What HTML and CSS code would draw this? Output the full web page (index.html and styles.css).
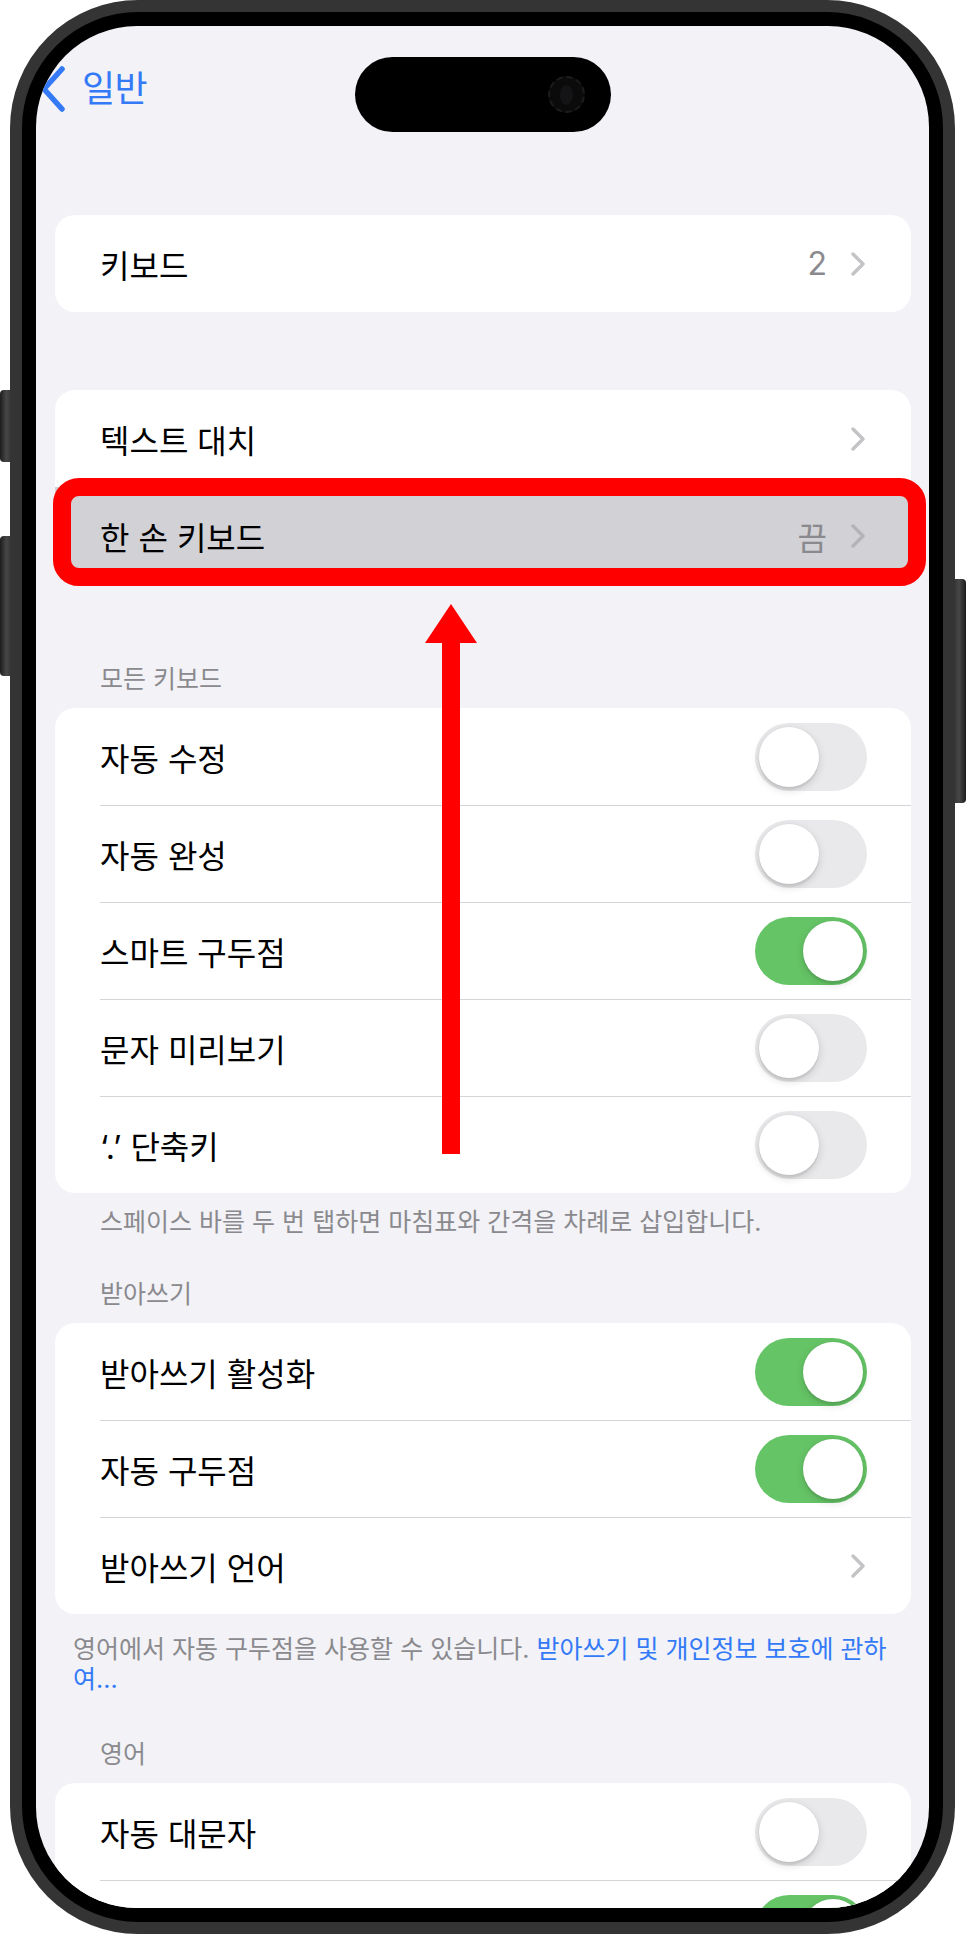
FILE: index.html
```html
<!DOCTYPE html>
<html lang="ko">
<head>
<meta charset="utf-8">
<title>키보드</title>
<link rel="stylesheet" href="styles.css">
</head>
<body>
<div class="device">
  <div class="side-btn btn-l1"></div>
  <div class="side-btn btn-l2"></div>
  <div class="side-btn btn-r1"></div>
  <div class="frame">
    <div class="screen">
      <div class="island"><span class="cam"><span class="cam-lens"></span></span></div>

      <nav class="nav">
        <div class="back">
          <svg class="back-chev" viewBox="0 0 26 46" width="26" height="46"><polyline points="22,3 4,23 22,43" fill="none" stroke="#347af6" stroke-width="5.5" stroke-linecap="round" stroke-linejoin="round"/></svg>
          <span class="back-label">일반</span>
        </div>
      </nav>

      <main class="content">
        <section class="card">
          <div class="row"><span class="label">키보드</span><span class="value">2</span><svg class="chev" viewBox="0 0 16 24" width="16" height="24"><polyline points="3,2 13,12 3,22" fill="none" stroke="#c4c4c7" stroke-width="3.4" stroke-linecap="round" stroke-linejoin="round"/></svg></div>
        </section>

        <section class="card card-gap">
          <div class="row"><span class="label">텍스트 대치</span><svg class="chev" viewBox="0 0 16 24" width="16" height="24"><polyline points="3,2 13,12 3,22" fill="none" stroke="#c4c4c7" stroke-width="3.4" stroke-linecap="round" stroke-linejoin="round"/></svg></div>
          <div class="row hl"><span class="label">한 손 키보드</span><span class="value">끔</span><svg class="chev" viewBox="0 0 16 24" width="16" height="24"><polyline points="3,2 13,12 3,22" fill="none" stroke="#b4b4b8" stroke-width="3.4" stroke-linecap="round" stroke-linejoin="round"/></svg><span class="annot"></span></div>
        </section>

        <h2 class="sec-h h-first">모든 키보드</h2>
        <section class="card">
          <div class="row"><span class="label">자동 수정</span><span class="toggle"><span class="knob"></span></span></div>
          <div class="row"><span class="label">자동 완성</span><span class="toggle"><span class="knob"></span></span></div>
          <div class="row"><span class="label">스마트 구두점</span><span class="toggle on"><span class="knob"></span></span></div>
          <div class="row"><span class="label">문자 미리보기</span><span class="toggle"><span class="knob"></span></span></div>
          <div class="row"><span class="label">‘.’ 단축키</span><span class="toggle"><span class="knob"></span></span></div>
        </section>
        <p class="sec-f">스페이스 바를 두 번 탭하면 마침표와 간격을 차례로 삽입합니다.</p>

        <h2 class="sec-h h-second">받아쓰기</h2>
        <section class="card">
          <div class="row"><span class="label">받아쓰기 활성화</span><span class="toggle on"><span class="knob"></span></span></div>
          <div class="row"><span class="label">자동 구두점</span><span class="toggle on"><span class="knob"></span></span></div>
          <div class="row"><span class="label">받아쓰기 언어</span><svg class="chev" viewBox="0 0 16 24" width="16" height="24"><polyline points="3,2 13,12 3,22" fill="none" stroke="#c4c4c7" stroke-width="3.4" stroke-linecap="round" stroke-linejoin="round"/></svg></div>
        </section>
        <p class="sec-f sec-f2"><span>영어에서 자동 구두점을 사용할 수 있습니다. </span><a class="link" href="#">받아쓰기 및 개인정보 보호에 관하여...</a></p>

        <h2 class="sec-h h-third">영어</h2>
        <section class="card">
          <div class="row"><span class="label">자동 대문자</span><span class="toggle"><span class="knob"></span></span></div>
          <div class="row"><span class="label"></span><span class="toggle on"><span class="knob"></span></span></div>
        </section>
      </main>

      <svg class="arrow" viewBox="0 0 52 550" width="52" height="550"><polygon points="26,0 0,39 52,39" fill="#ff0000"/><rect x="17" y="38" width="18" height="512" fill="#ff0000"/></svg>
    </div>
  </div>
</div>
</body>
</html>
```

FILE: styles.css
```css
* { box-sizing: border-box; }

html, body {
  margin: 0;
  padding: 0;
}

body {
  width: 966px;
  height: 1936px;
  background: #ffffff;
  overflow: hidden;
  font-family: "Inter", "Noto Sans CJK KR", sans-serif;
}

.device {
  position: relative;
  width: 966px;
  height: 1936px;
}

.side-btn {
  position: absolute;
  background: linear-gradient(90deg, #1c1c1c 0%, #474747 45%, #2a2a2a 100%);
  border-radius: 4px;
  z-index: 0;
}
.btn-l1 { left: 0; top: 390px; width: 14px; height: 72px; }
.btn-l2 { left: 0; top: 536px; width: 14px; height: 140px; }
.btn-r1 { left: 951px; top: 579px; width: 15px; height: 224px; background: linear-gradient(90deg, #2a2a2a 0%, #474747 55%, #1c1c1c 100%); }

.frame {
  position: relative;
  z-index: 1;
  margin-left: 10px;
  width: 945px;
  height: 1934px;
  border: 12px solid #343434;
  border-radius: 128px;
  background: #000;
  padding: 14px;
}

.screen {
  position: relative;
  width: 100%;
  height: 100%;
  border-radius: 101px;
  overflow: hidden;
  background: #f2f2f7;
}

.island {
  position: absolute;
  left: 319px;
  top: 31px;
  width: 256px;
  height: 75px;
  border-radius: 38px;
  background: #000;
  display: flex;
  align-items: center;
  justify-content: flex-end;
  padding-right: 26px;
  z-index: 5;
}
.cam {
  width: 37px;
  height: 37px;
  border-radius: 50%;
  background: #0b0b0b;
  border: 2px dashed #1d1d1f;
  display: flex;
  align-items: center;
  justify-content: center;
}
.cam-lens {
  width: 13px;
  height: 20px;
  border-radius: 50%;
  background: #141416;
}

.nav {
  height: 189px;
  padding-top: 40px;
}
.back {
  display: flex;
  align-items: center;
  margin-left: 4px;
  height: 46px;
}
.back-chev { display: block; }
.back-label {
  margin-left: 16px;
  font-size: 36px;
  letter-spacing: -0.5px;
  line-height: 46px;
  color: #347af6;
}

.content {
  padding: 0 18px 0 19px;
}

.card {
  background: #ffffff;
  border-radius: 20px;
}
.card-gap { margin-top: 78px; }

.row {
  position: relative;
  height: 97px;
  display: flex;
  align-items: center;
  padding: 0 45px;
  font-size: 32px;
  color: #000;
}
.row + .row {
  background: linear-gradient(#d5d5d9, #d5d5d9) 45px 0 / calc(100% - 45px) 1px no-repeat;
}
.row.hl {
  background: #d1d1d6;
  border-radius: 0 0 20px 20px;
}
.label { flex: 1; white-space: nowrap; }
.value {
  color: #8a8a8e;
  margin-right: 23px;
}
.chev { display: block; flex: none; }

.annot {
  position: absolute;
  left: -2px;
  top: -9px;
  width: 873px;
  height: 108px;
  border: 18px solid #ff0000;
  border-radius: 26px;
  z-index: 3;
}

.toggle {
  flex: none;
  width: 112px;
  height: 68px;
  margin-right: -1px;
  border-radius: 34px;
  background: #e9e9eb;
  padding: 4px;
  display: flex;
  justify-content: flex-start;
}
.toggle.on {
  background: #65c466;
  justify-content: flex-end;
}
.knob {
  width: 60px;
  height: 60px;
  border-radius: 50%;
  background: #fff;
  box-shadow: 0 3px 8px rgba(0, 0, 0, 0.15), 0 3px 1px rgba(0, 0, 0, 0.06), 0 0 0 0.5px rgba(0, 0, 0, 0.04);
}

.sec-h {
  margin: 0 0 14px;
  padding-left: 45px;
  font-size: 25px;
  font-weight: 400;
  line-height: 30px;
  color: #8a8a8e;
}
.h-first { margin-top: 80px; }
.h-second { margin-top: 42px; }
.h-third { margin-top: 45px; }

.sec-f {
  margin: 14px 0 0;
  padding-left: 45px;
  font-size: 25px;
  line-height: 30px;
  color: #8a8a8e;
}
.sec-f2 {
  margin-top: 20px;
  padding-left: 18px;
  padding-right: 18px;
}
.link {
  color: #347af6;
  text-decoration: none;
}

.arrow {
  position: absolute;
  left: 389px;
  top: 578px;
  z-index: 10;
}
```
